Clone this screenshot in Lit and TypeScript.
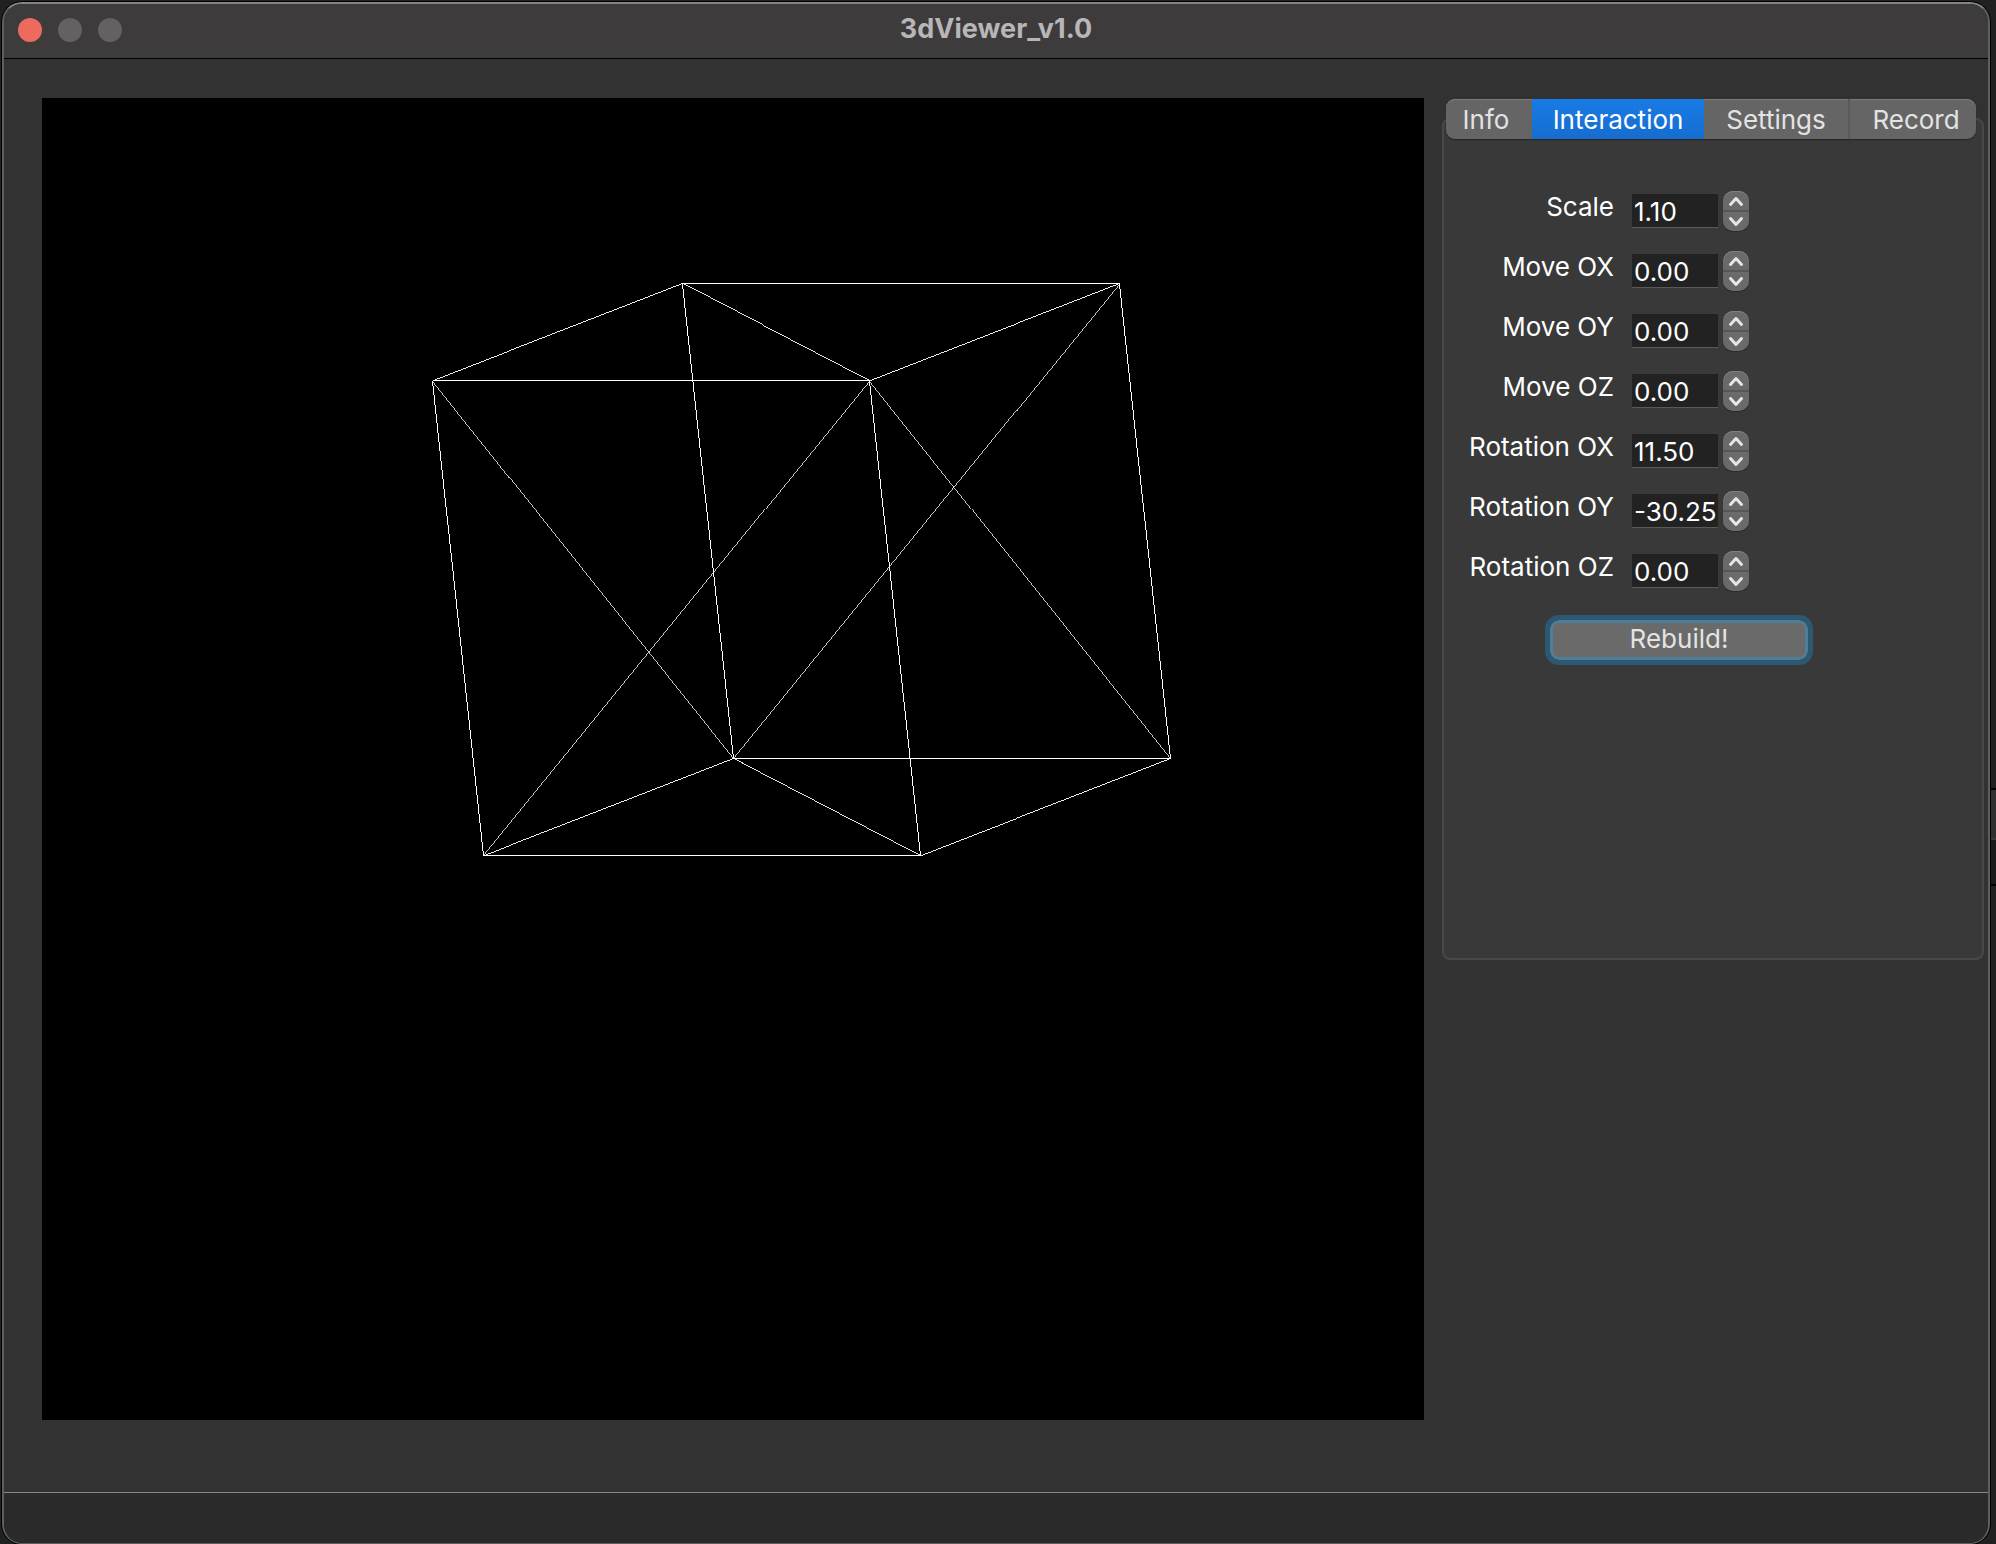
import { LitElement, html, css, svg } from "lit";
import { customElement, property, state } from "lit/decorators.js";
import { classMap } from "lit/directives/class-map.js";

type Point = [number, number];

const VERTICES: Record<string, Point> = {
  a: [390, 282],
  b: [640, 185],
  c: [1077, 185],
  d: [827, 282],
  e: [441, 757],
  f: [691, 660],
  g: [878, 757],
  h: [1128, 660],
};

const EDGES = [
  "ab", "bc", "cd", "ad", "bd", "ae", "af", "de", "bf",
  "cf", "dg", "ch", "dh", "ef", "fh", "eg", "fg", "gh",
];

const TABS = ["Info", "Interaction", "Settings", "Record"];

const FIELDS: Array<[string, string]> = [
  ["Scale", "1.10"],
  ["Move OX", "0.00"],
  ["Move OY", "0.00"],
  ["Move OZ", "0.00"],
  ["Rotation OX", "11.50"],
  ["Rotation OY", "-30.25"],
  ["Rotation OZ", "0.00"],
];

@customElement("wireframe-view")
export class WireframeView extends LitElement {
  static styles = css`
    :host {
      display: block;
      min-width: 0;
      min-height: 0;
      background: #000;
    }
    .scene {
      display: block;
      width: 100%;
      height: 100%;
      stroke: #fff;
      shape-rendering: crispEdges;
    }
  `;

  // Thins slanted edges so that each covers one pixel per step of its major axis.
  private edge(name: string) {
    const [x1, y1] = VERTICES[name[0]];
    const [x2, y2] = VERTICES[name[1]];
    const dx = Math.abs(x2 - x1);
    const dy = Math.abs(y2 - y1);
    const width = Math.max(dx, dy) / Math.hypot(dx, dy);
    return svg`<line
      x1=${x1 + 0.5} y1=${y1 + 0.5} x2=${x2 + 0.5} y2=${y2 + 0.5}
      stroke-width=${width}
    ></line>`;
  }

  render() {
    return html`
      <svg class="scene" viewBox="0 0 1382 1322" role="img" aria-label="Wireframe model">
        ${EDGES.map((name) => this.edge(name))}
      </svg>
    `;
  }
}

@customElement("spin-field")
export class SpinField extends LitElement {
  static styles = css`
    :host {
      display: grid;
      grid-template-columns: 170px 86px 26px;
      align-items: center;
      height: 40px;
    }
    .label {
      padding-right: 18px;
      padding-bottom: 8px;
      text-align: right;
      white-space: nowrap;
      line-height: 32px;
    }
    .value {
      box-sizing: border-box;
      width: 86px;
      height: 34px;
      margin: 0;
      padding: 2px 0 0 2px;
      border: 0;
      border-bottom: 1px solid #5a5a5a;
      border-radius: 0;
      outline: none;
      background: #222;
      color: #fff;
      font: inherit;
      appearance: textfield;
    }
    .value::-webkit-inner-spin-button {
      appearance: none;
      margin: 0;
    }
    .stepper {
      display: flex;
      flex-direction: column;
      width: 26px;
      height: 40px;
      margin-left: 5px;
      border-radius: 10px;
      overflow: hidden;
      background: #6a6a6a;
      box-shadow: 0 1px 1px #2a2a2a, inset 0 1px 0 #808080;
    }
    .step {
      display: flex;
      flex: 1;
      align-items: center;
      justify-content: center;
      padding: 0;
      border: 0;
      background: none;
    }
    .step + .step {
      border-top: 2px solid #575757;
    }
    .chevron {
      width: 16px;
      height: 12px;
      fill: none;
      stroke: #e6e6e6;
      stroke-width: 3;
      stroke-linecap: round;
      stroke-linejoin: round;
    }
  `;

  @property() label = "";
  @property() value = "0.00";

  private nudge(delta: number) {
    this.value = (Number(this.value) + delta).toFixed(2);
  }

  render() {
    return html`
      <label class="label" for="value">${this.label}</label>
      <input
        class="value"
        id="value"
        type="number"
        step="0.01"
        .value=${this.value}
        @change=${(e: Event) => (this.value = (e.target as HTMLInputElement).value)}
      />
      <div class="stepper">
        <button class="step" aria-label="Increase ${this.label}" @click=${() => this.nudge(0.1)}>
          <svg class="chevron" viewBox="0 0 16 12"><path d="M2.5 9.5 8 3.5l5.5 6"></path></svg>
        </button>
        <button class="step" aria-label="Decrease ${this.label}" @click=${() => this.nudge(-0.1)}>
          <svg class="chevron" viewBox="0 0 16 12"><path d="M2.5 2.5 8 8.5l5.5-6"></path></svg>
        </button>
      </div>
    `;
  }
}

@customElement("app-root")
export class AppRoot extends LitElement {
  static styles = css`
    :host {
      display: block;
      box-sizing: border-box;
      height: 100vh;
      padding: 2px 6px 0 2px;
      background:
        linear-gradient(
            #212121 788px, #000 788px 790px, #303030 790px 838px, #3c3c3c 838px 840px,
            #1b1b1b 840px 884px, #000 884px 886px, #212121 886px
          )
          right / 5px 100% no-repeat,
        #1f2122;
      color: #fff;
      font: 26px/32px Inter, "Liberation Sans", sans-serif;
    }
    .window {
      display: flex;
      flex-direction: column;
      box-sizing: border-box;
      height: 100%;
      border: 2px solid #5e5e5e;
      border-top-color: #858484;
      border-bottom-width: 1px;
      border-radius: 20px;
      overflow: hidden;
      background: #323232;
      box-shadow: 0 0 0 1px #000;
    }
    .titlebar {
      display: grid;
      grid-template-columns: 1fr auto 1fr;
      align-items: center;
      box-sizing: border-box;
      height: 55px;
      padding: 0 14px 2px;
      border-bottom: 1px solid #000;
      background: #3e3b3c;
    }
    .lights {
      display: flex;
      gap: 16px;
    }
    .light {
      width: 24px;
      height: 24px;
      padding: 0;
      border: 0;
      border-radius: 50%;
      background: #636162;
    }
    .light.close {
      background: #ed6a5e;
    }
    .title {
      margin: 0;
      padding-bottom: 2px;
      color: #b8b6b7;
      font-size: 27px;
      font-weight: 700;
      line-height: 32px;
    }
    .body {
      display: grid;
      flex: 1;
      grid-template-columns: minmax(0, 1fr) 542px;
      gap: 18px;
      min-height: 0;
      padding: 39px 4px 72px 38px;
    }
    .sidebar {
      display: flex;
      flex-direction: column;
      padding-top: 1px;
    }
    .tabs {
      display: grid;
      grid-template-columns: 86px 172px 144px 128px;
      z-index: 1;
      height: 40px;
      margin: 0 8px -21px 4px;
      border-radius: 9px;
      overflow: hidden;
      background: #656565;
      box-shadow: 0 1px 1px #242424, inset 0 1px 0 #7c7c7c;
    }
    .tab {
      padding: 2px 0 0;
      border: 0;
      background: none;
      color: #e3e3e3;
      font: inherit;
    }
    .tab:first-child {
      padding-right: 6px;
    }
    .tab:last-child {
      padding-left: 6px;
      border-left: 2px solid #5a5a5a;
    }
    .tab.active {
      background: linear-gradient(#197be6, #166dcf);
      color: #fff;
    }
    .panel {
      display: flex;
      flex-direction: column;
      box-sizing: border-box;
      min-height: 842px;
      padding: 71px 18px 0;
      border: 2px solid #484848;
      border-radius: 8px;
      background: #393939;
    }
    .fields {
      display: flex;
      flex-direction: column;
      gap: 20px;
    }
    .rebuild {
      width: 258px;
      height: 40px;
      margin: 29px 0 0 88px;
      padding: 0 0 2px;
      border: 3px solid #507e9a;
      border-radius: 9px;
      outline: 5px solid #2d5872;
      background: #6a6a6a;
      color: #e3e3e3;
      font: inherit;
    }
    .statusbar {
      height: 50px;
      border-top: 1px solid #858686;
      background: #2a2a2a;
    }
  `;

  @state() private active = "Interaction";

  render() {
    return html`
      <div class="window">
        <header class="titlebar">
          <div class="lights">
            <button class="light close" aria-label="Close"></button>
            <button class="light" aria-label="Minimize"></button>
            <button class="light" aria-label="Zoom"></button>
          </div>
          <h1 class="title">3dViewer_v1.0</h1>
        </header>
        <main class="body">
          <wireframe-view></wireframe-view>
          <aside class="sidebar">
            <div class="tabs" role="tablist">
              ${TABS.map(
                (name) => html`
                  <button
                    role="tab"
                    aria-selected=${name === this.active}
                    class=${classMap({ tab: true, active: name === this.active })}
                    @click=${() => (this.active = name)}
                  >${name}</button>
                `,
              )}
            </div>
            <section class="panel" role="tabpanel">
              <div class="fields">
                ${FIELDS.map(
                  ([label, value]) => html`<spin-field .label=${label} .value=${value}></spin-field>`,
                )}
              </div>
              <button class="rebuild">Rebuild!</button>
            </section>
          </aside>
        </main>
        <footer class="statusbar"></footer>
      </div>
    `;
  }
}
